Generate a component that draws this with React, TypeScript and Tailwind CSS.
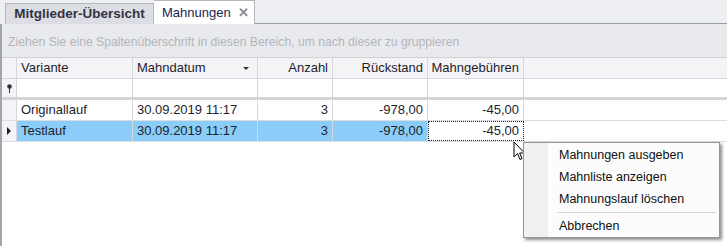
const font = { fontFamily: '"Liberation Sans", Arial, sans-serif' };

const cols = [
  { key: "variante", label: "Variante", w: "w-[116px]", align: "text-left" },
  { key: "datum", label: "Mahndatum", w: "w-[125px]", align: "text-left" },
  { key: "anzahl", label: "Anzahl", w: "w-[75px]", align: "text-right" },
  { key: "rueck", label: "Rückstand", w: "w-[95px]", align: "text-right" },
  { key: "gebuehr", label: "Mahngebühren", w: "w-[96px]", align: "text-right" },
];

const rows = [
  { variante: "Originallauf", datum: "30.09.2019 11:17", anzahl: "3", rueck: "-978,00", gebuehr: "-45,00" },
  { variante: "Testlauf", datum: "30.09.2019 11:17", anzahl: "3", rueck: "-978,00", gebuehr: "-45,00" },
];

export default function App() {
  return (
    <div className="relative h-[246px] w-[727px] overflow-hidden bg-white text-[12px] text-[#1d1d2c]" style={font}>
      {/* TABS */}
      <div className="flex h-[24px] items-end bg-[#eeeff2] pl-[5px]">
        <div className="flex h-[21px] w-[149px] items-center justify-center border border-b-0 border-[#b5b7bf] bg-[#dddee3] text-[13.5px] font-bold text-[#333344]">
          Mitglieder-Übersicht
        </div>
        <div className="flex h-[24px] w-[101px] items-center border border-b-0 border-l-0 border-[#b5b7bf] bg-white pl-[8px] text-[13px] text-[#1e1e50]">
          Mahnungen
          <span className="ml-auto mr-[5px] text-[13px] font-bold text-[#8a8c94]">✕</span>
        </div>
        <div className="h-[1px] flex-1 bg-[#9c9ea6]" />
      </div>

      <div className="flex h-[222px]">
        <div className="w-[2px] bg-[#a3a5ad]" />
        <div className="relative flex-1">
          {/* GROUP PANEL */}
          <div className="flex h-[34px] items-center border-b border-[#d0d1d6] bg-[#e9eaee] pl-[6px] pt-[3px] text-[12.2px] text-[#b3b5bb]">
            Ziehen Sie eine Spaltenüberschrift in diesen Bereich, um nach dieser zu gruppieren
          </div>

          {/* HEADER */}
          <div className="flex h-[21px] border-b border-[#d6d7dc] bg-[#f4f4f6] text-[13px]">
            <div className="w-[15px] border-r border-[#d6d7dc]" />
            {cols.map((c) => (
              <div
                key={c.key}
                className={`${c.w} ${c.align} relative flex items-center border-r border-[#d6d7dc] px-[4px] ${c.align === "text-right" ? "justify-end" : ""}`}
              >
                {c.label}
                {c.key === "datum" && (
                  <span className="absolute right-[8px] top-[9px] h-0 w-0 border-x-[3px] border-t-[3px] border-x-transparent border-t-[#333]" />
                )}
              </div>
            ))}
          </div>

          {/* FILTER ROW */}
          <div className="flex h-[21px] border-b-[3px] border-[#d3d4d8]">
            <div className="flex w-[15px] items-center justify-center border-r border-[#d6d7dc] bg-[#f4f4f6]">
              <svg width="7" height="9" viewBox="0 0 7 9">
                <circle cx="3.5" cy="2.5" r="2.3" fill="#333" />
                <rect x="3" y="4" width="1" height="5" fill="#333" />
              </svg>
            </div>
            {cols.map((c) => (
              <div key={c.key} className={`${c.w} border-r border-[#d6d7dc]`} />
            ))}
          </div>

          {/* DATA */}
          {rows.map((r, i) => {
            const sel = i === 1;
            return (
              <div key={i} className="flex h-[21px] border-b border-[#dcdde0] text-[13px]">
                <div className="flex w-[15px] items-center justify-center border-r border-[#d6d7dc] bg-[#f4f4f6]">
                  {sel && (
                    <span className="h-0 w-0 border-y-[4px] border-l-[4px] border-y-transparent border-l-[#222]" />
                  )}
                </div>
                {cols.map((c) => {
                  const focused = sel && c.key === "gebuehr";
                  return (
                    <div
                      key={c.key}
                      className={`${c.w} flex items-center px-[4px] ${c.align === "text-right" ? "justify-end" : ""} ${
                        focused
                          ? "border border-dotted border-[#222] bg-white"
                          : `border-r border-[#d6d7dc] ${sel ? "bg-[#8bcdf9]" : ""}`
                      }`}
                    >
                      {(r as Record<string, string>)[c.key]}
                    </div>
                  );
                })}
              </div>
            );
          })}
        </div>
      </div>

      {/* CURSOR */}
      <svg className="absolute left-[513px] top-[141px]" width="13" height="20" viewBox="0 0 13 20">
        <path d="M1 1 L1 16 L4.5 12.5 L7 18.5 L9 17.6 L6.6 12 L11.5 12 Z" fill="white" stroke="black" strokeWidth="1" strokeLinejoin="miter" />
      </svg>

      {/* CONTEXT MENU */}
      <div className="absolute left-[523px] top-[142px] flex h-[96px] w-[197px] border border-[#979797] bg-[#fcfcfc] shadow-[2px_2px_3px_rgba(0,0,0,0.45)]">
        <div className="w-[25px] border-r border-white bg-[#f0f0f0]" />
        <div className="flex-1 pt-[1px] text-[12.5px] text-[#111]">
          <div className="flex h-[22px] items-center pl-[10px]">Mahnungen ausgeben</div>
          <div className="flex h-[22px] items-center pl-[10px]">Mahnliste anzeigen</div>
          <div className="flex h-[22px] items-center pl-[10px]">Mahnungslauf löschen</div>
          <div className="my-[2px] ml-[8px] mr-[3px] h-[1px] bg-[#d7d7d7]" />
          <div className="flex h-[22px] items-center pl-[10px]">Abbrechen</div>
        </div>
      </div>
    </div>
  );
}
